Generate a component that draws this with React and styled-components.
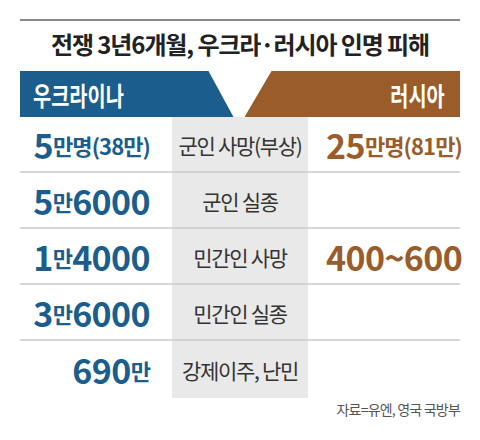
import React from "react";
import styled, { createGlobalStyle } from "styled-components";

const Global = createGlobalStyle`
  html, body { margin: 0; padding: 0; background: #fff; }
  body { font-family: "Noto Sans CJK KR", "Noto Sans", sans-serif; }
`;

const BLUE = "#1b5d8c";
const BROWN = "#9a5c2b";

const Page = styled.div`
  width: 440px;
  margin: 0 auto;
  padding-top: 19px;
`;

const Title = styled.h1`
  margin: 0;
  height: 52px;
  border-top: 2px solid #8a8a8a;
  display: flex;
  align-items: center;
  justify-content: center;
  padding-bottom: 6px;
  box-sizing: border-box;
  font-size: 24px;
  font-weight: 700;
  color: #222;
  letter-spacing: -1.1px;
`;

const Header = styled.div`
  display: flex;
  gap: 11px;
  height: 46px;
`;

const Side = styled.div`
  flex: 1;
  display: flex;
  align-items: center;
  justify-content: ${(p) => (p.$right ? "flex-end" : "flex-start")};
  padding: 0 ${(p) => (p.$right ? "15px" : "0")} 0 ${(p) => (p.$right ? "0" : "13px")};
  background: ${(p) => (p.$right ? BROWN : BLUE)};
  clip-path: ${(p) =>
    p.$right
      ? "polygon(27px 0, 100% 0, 100% 100%, 0 100%)"
      : "polygon(0 0, calc(100% - 25px) 0, 100% 100%, 0 100%)"};
  color: #fff;
  font-size: 26px;
  font-weight: 700;
`;

const Squeeze = styled.span`
  display: inline-block;
  white-space: nowrap;
  transform: scaleX(0.76);
  transform-origin: ${(p) => (p.$right ? "right" : "left")} center;
`;

const Table = styled.div`
  display: grid;
  grid-template-columns: 152px 136px 152px;
`;

const Cell = styled.div`
  height: ${(p) => (p.$last ? "57px" : "56px")};
  box-sizing: border-box;
  border-bottom: ${(p) => (p.$last ? "none" : "2px solid #d6d6d6")};
  display: flex;
  align-items: center;
  white-space: nowrap;
  padding-top: ${(p) => (p.$last ? "0" : "2px")};
`;

const LeftCell = styled(Cell)`
  justify-content: flex-end;
  padding-right: 22px;
  color: ${BLUE};
`;

const MidCell = styled(Cell)`
  justify-content: center;
  background: #e9e9e9;
  border-bottom-color: #d2d2d2;
  font-size: 21px;
  color: #333;
  letter-spacing: -1.3px;
`;

const RightCell = styled(Cell)`
  justify-content: flex-start;
  padding-left: 18px;
  color: ${BROWN};
`;

const Num = styled.span`
  font-size: 34px;
  font-weight: 700;
  letter-spacing: -0.6px;
  line-height: 1;
`;

const Unit = styled.span`
  font-size: 22px;
  font-weight: 700;
  letter-spacing: -0.9px;
  line-height: 1;
`;

const Source = styled.div`
  text-align: right;
  font-size: 14px;
  color: #555;
  letter-spacing: -0.8px;
  padding-top: 1px;
`;

const rows = [
  {
    left: [["5", true], ["만명(38만)", false]],
    mid: "군인 사망(부상)",
    right: [["25", true], ["만명(81만)", false]],
  },
  { left: [["5", true], ["만", false], ["6000", true]], mid: "군인 실종", right: null },
  {
    left: [["1", true], ["만", false], ["4000", true]],
    mid: "민간인 사망",
    right: [["400~600", true]],
  },
  { left: [["3", true], ["만", false], ["6000", true]], mid: "민간인 실종", right: null },
  { left: [["690", true], ["만", false]], mid: "강제이주, 난민", right: null },
];

const Value = ({ parts }) =>
  parts
    ? parts.map(([t, big], i) => (big ? <Num key={i}>{t}</Num> : <Unit key={i}>{t}</Unit>))
    : null;

export default function App() {
  return (
    <Page>
      <Global />
      <Title>전쟁 3년6개월, 우크라·러시아 인명 피해</Title>
      <Header>
        <Side>
          <Squeeze>우크라이나</Squeeze>
        </Side>
        <Side $right>
          <Squeeze $right>러시아</Squeeze>
        </Side>
      </Header>
      <Table>
        {rows.map((r, i) => {
          const last = i === rows.length - 1;
          return (
            <React.Fragment key={i}>
              <LeftCell $last={last}>
                <Value parts={r.left} />
              </LeftCell>
              <MidCell $last={last}>{r.mid}</MidCell>
              <RightCell $last={last}>
                <Value parts={r.right} />
              </RightCell>
            </React.Fragment>
          );
        })}
      </Table>
      <Source>자료=유엔, 영국 국방부</Source>
    </Page>
  );
}
